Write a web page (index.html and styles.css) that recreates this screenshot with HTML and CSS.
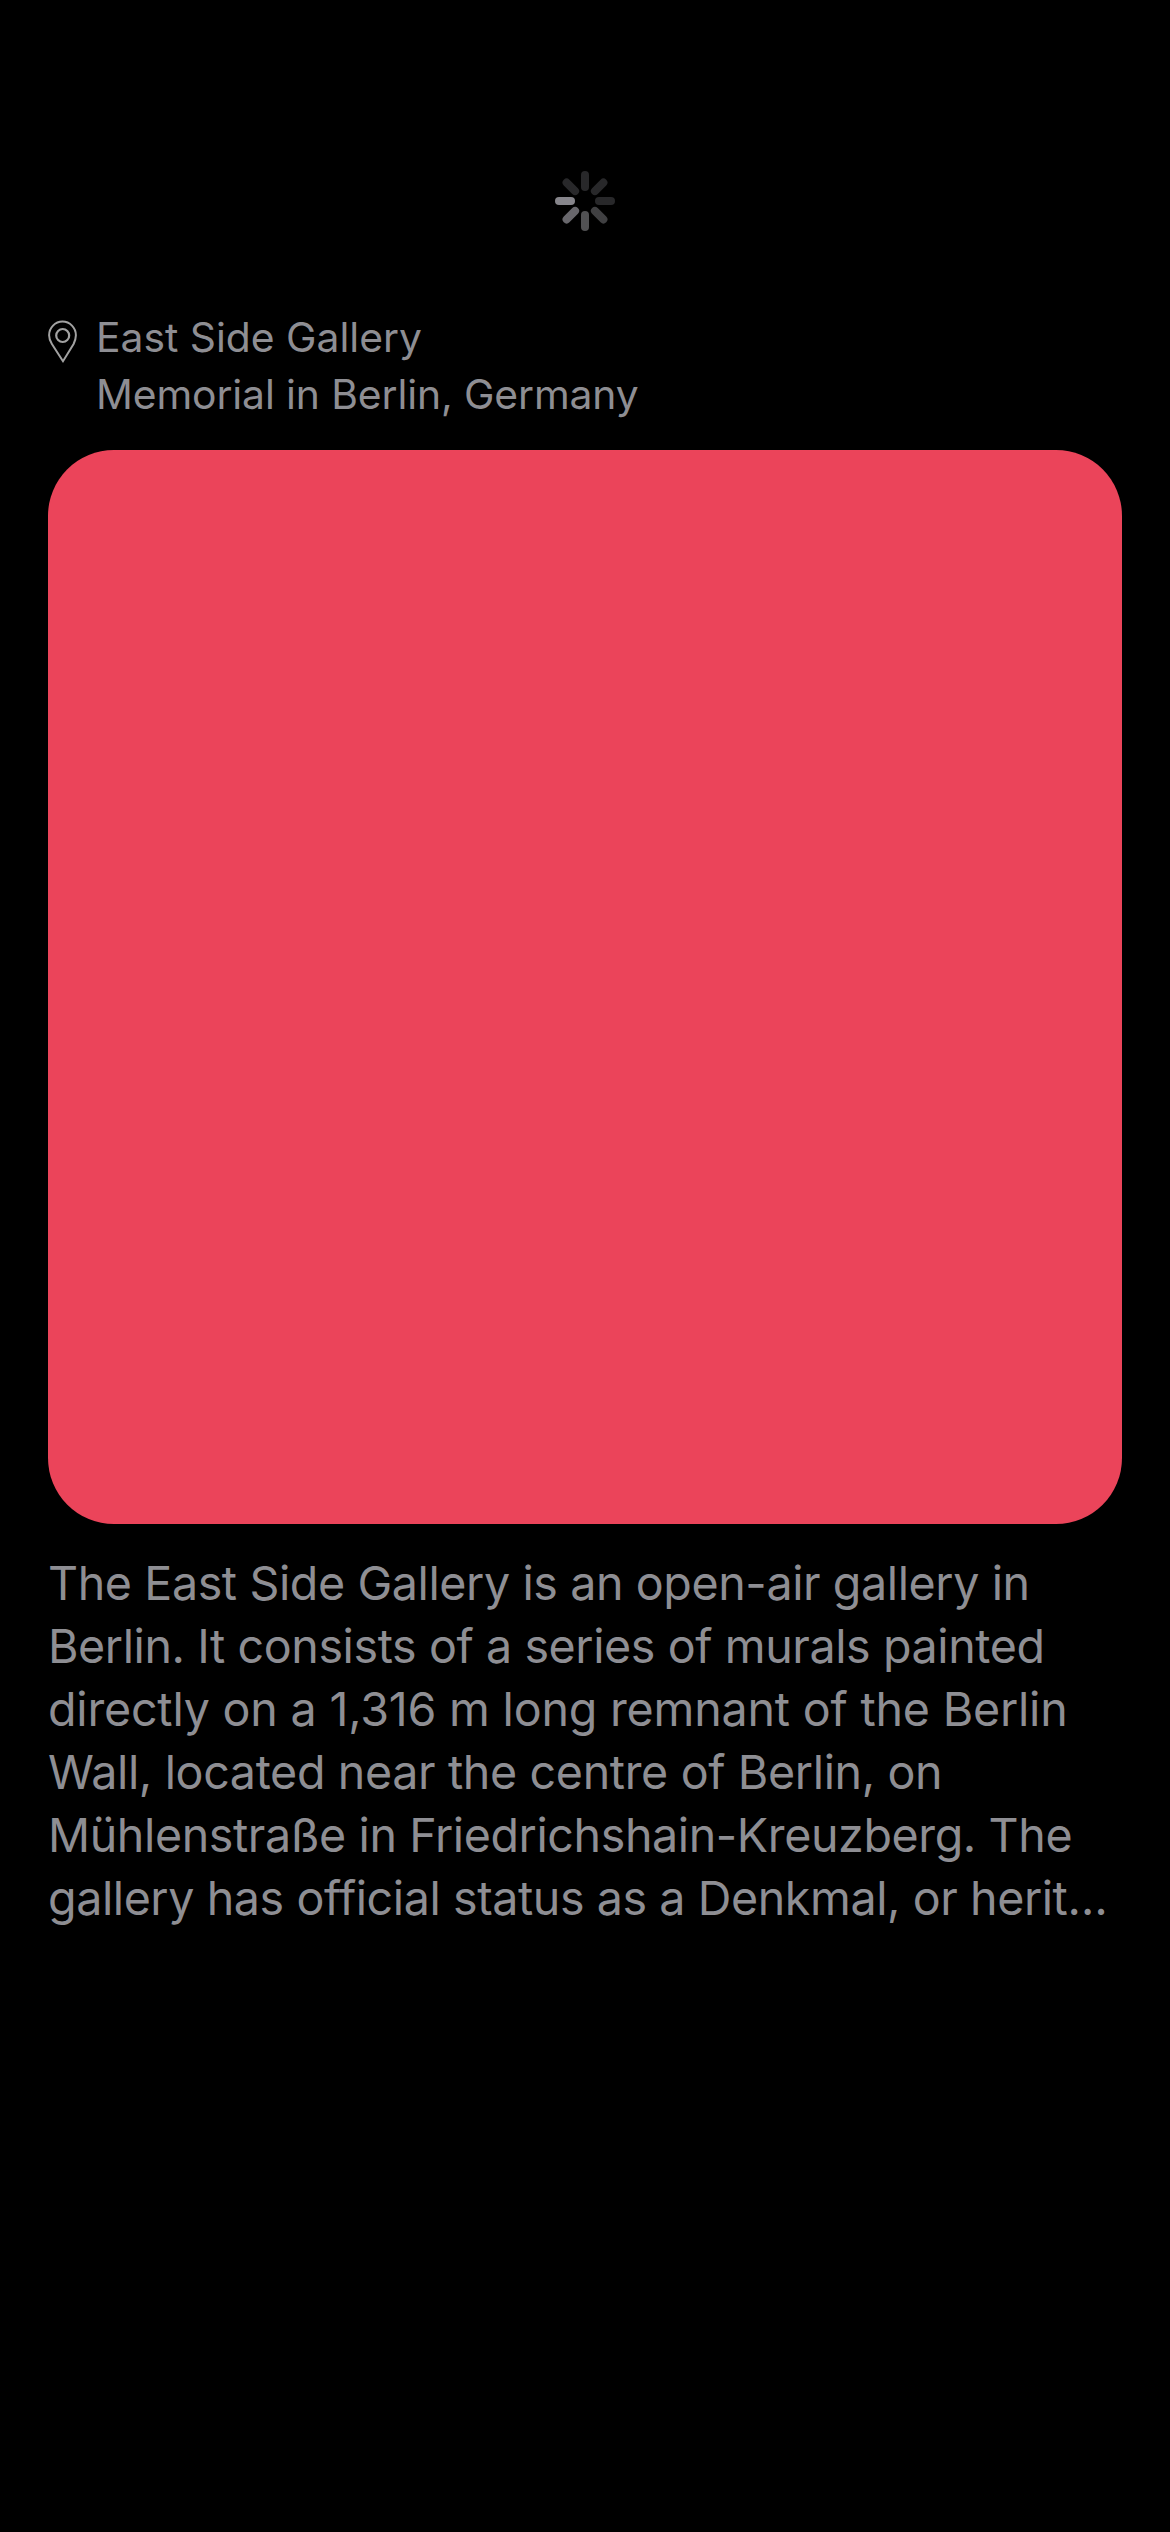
FILE: index.html
```html
<!DOCTYPE html>
<html lang="en">
<head>
<meta charset="utf-8">
<title>East Side Gallery</title>
<link rel="stylesheet" href="styles.css">
</head>
<body>
<main class="screen">
  <svg class="spinner" viewBox="0 0 60 60" fill="none" stroke-width="8" stroke-linecap="round">
    <path d="M30 4v12" stroke="#28282a"/>
    <path d="M48.400 11.600l-8.500 8.500" stroke="#28282a"/>
    <path d="M56 30H44" stroke="#28282a"/>
    <path d="M48.400 48.400l-8.500-8.500" stroke="#404042"/>
    <path d="M30 56V44" stroke="#515153"/>
    <path d="M11.600 48.400l8.500-8.500" stroke="#68676c"/>
    <path d="M4 30h12" stroke="#86858b"/>
    <path d="M11.600 11.600l8.500 8.500" stroke="#28282a"/>
  </svg>
  <header class="place">
    <svg class="pin" viewBox="0 0 30 44" fill="none" stroke="#a2a2a2" stroke-width="2">
      <path d="M15 41.200L3.900 24C2 21 1.100 18 1.100 15.300a13.400 13.700 0 0 1 26.800 0C27.900 18 27 21 25.600 24z" transform="translate(0 0)"/>
      <circle cx="14.700" cy="15.500" r="6.500" stroke-width="2.200"/>
    </svg>
    <div class="labels">
      <h1 class="name">East Side Gallery</h1>
      <p class="kind">Memorial in Berlin, Germany</p>
    </div>
  </header>
  <div class="artwork"></div>
  <p class="summary"><span class="l1">The East Side Gallery is an open-air gallery in</span> <span class="l2">Berlin. It consists of a series of murals painted</span> <span class="l3">directly on a 1,316 m long remnant of the Berlin</span> <span class="l4">Wall, located near the centre of Berlin, on</span> <span class="l5">Mühlenstraße in Friedrichshain-Kreuzberg. The</span> <span class="l6">gallery has official status as a Denkmal, or herit…</span></p>
</main>
</body>
</html>
```
FILE: styles.css
```css
body {
  margin: 0;
  background: #000;
}

.screen {
  box-sizing: border-box;
  width: 1170px;
  height: 2532px;
  padding: 171px 48px 0;
  display: flex;
  flex-direction: column;
  font-family: Inter, sans-serif;
  color: #8e8e93;
}

.spinner {
  width: 60px;
  height: 60px;
  align-self: center;
}

.place {
  display: flex;
  margin-top: 78px;
  height: 141px;
}

.pin {
  width: 30px;
  height: 44px;
  margin-top: 11px;
}

.labels {
  margin-left: 18px;
}

.name,
.kind {
  margin: 0;
  font-size: 40.8px;
  line-height: 57px;
  font-weight: 400;
  white-space: nowrap;
}

.name { letter-spacing: 0; }
.kind { letter-spacing: -0.1px; }

.artwork {
  height: 1074px;
  border-radius: 66px;
  background: #eb445a;
}

.summary {
  margin: 28px 0 0;
  font-size: 46.6px;
  line-height: 63px;
}

.summary span {
  display: block;
  width: max-content;
  white-space: nowrap;
}

.l1 { letter-spacing: -0.4px; }
.l2 { letter-spacing: -0.41px; }
.l3 { letter-spacing: -0.2px; }
.l4 { letter-spacing: -0.36px; }
.l5 { letter-spacing: -0.4px; }
.l6 { letter-spacing: -0.42px; }
```
